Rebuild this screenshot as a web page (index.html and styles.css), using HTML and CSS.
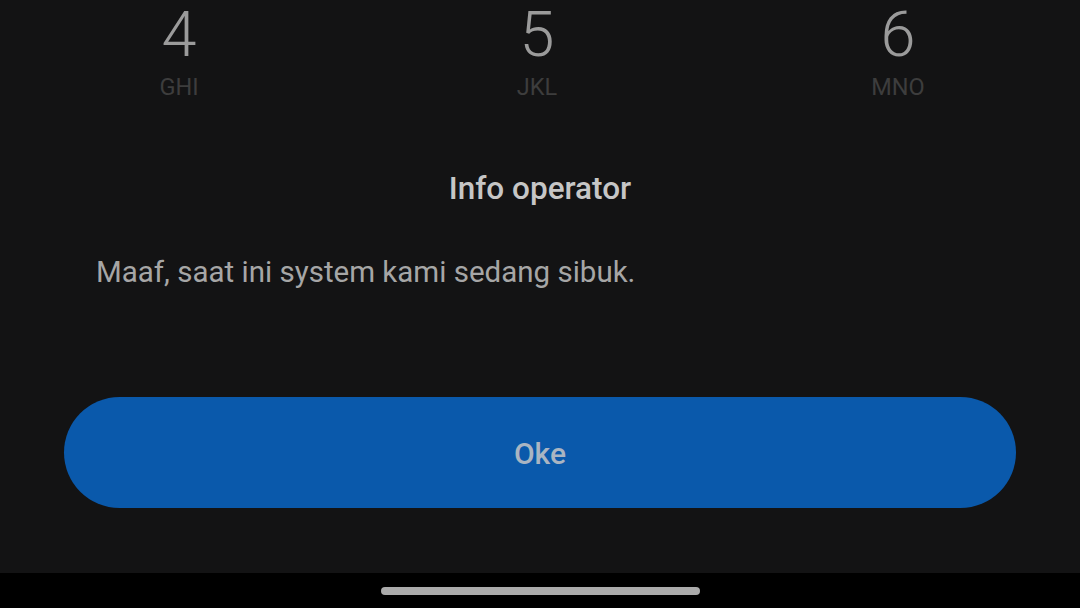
FILE: index.html
```html
<!DOCTYPE html>
<html lang="id">
<head>
<meta charset="utf-8">
<title>Info operator</title>
<link rel="stylesheet" href="styles.css">
</head>
<body>
<div class="screen">
  <main class="content">
    <div class="keypad">
      <div class="key"><span class="digit">4</span><span class="letters">GHI</span></div>
      <div class="key"><span class="digit">5</span><span class="letters">JKL</span></div>
      <div class="key"><span class="digit">6</span><span class="letters">MNO</span></div>
    </div>
    <section class="dialog">
      <h1 class="title">Info operator</h1>
      <p class="message">Maaf, saat ini system kami sedang sibuk.</p>
      <button class="ok-button">Oke</button>
    </section>
  </main>
  <footer class="navbar"><div class="handle"></div></footer>
</div>
</body>
</html>
```

FILE: styles.css
```css
* { box-sizing: border-box; }
html, body { margin: 0; padding: 0; }
body {
  width: 1080px;
  height: 608px;
  overflow: hidden;
  background: #131313;
  font-family: Roboto, "Noto Sans", "Liberation Sans", sans-serif;
}
.screen {
  display: flex;
  flex-direction: column;
  height: 608px;
}
.content {
  flex: 1;
  display: flex;
  flex-direction: column;
  background: #131314;
}
.keypad {
  display: grid;
  grid-template-columns: 358px 358px 364px;
  padding-top: 3px;
}
.key {
  display: flex;
  flex-direction: column;
  align-items: center;
}
.digit {
  font-size: 63px;
  line-height: 63px;
  font-weight: 300;
  color: #9b9b9b;
}
.letters {
  margin-top: 9px;
  font-size: 23.5px;
  line-height: 24px;
  color: #3d3d3d;
}
.dialog {
  display: flex;
  flex-direction: column;
  align-items: center;
  padding: 0 64px;
}
.title {
  margin: 70px 0 0;
  font-size: 31.5px;
  line-height: 40px;
  font-weight: 500;
  color: #c6c6c6;
}
.message {
  align-self: stretch;
  margin: 43px 0 0;
  padding-left: 32px;
  font-size: 29.5px;
  line-height: 40px;
  color: #a6a6a6;
}
.ok-button {
  align-self: stretch;
  margin-top: 105px;
  height: 111px;
  border: none;
  border-radius: 56px;
  background: #0a59ab;
  color: #aab5c2;
  font-family: inherit;
  font-size: 30px;
  font-weight: 500;
  padding: 2px 0 0;
}
.navbar {
  height: 35px;
  background: #000;
  display: flex;
  justify-content: center;
  align-items: flex-start;
  padding-top: 14px;
}
.handle {
  width: 319px;
  height: 8px;
  border-radius: 4px;
  background: #ababab;
}
```
